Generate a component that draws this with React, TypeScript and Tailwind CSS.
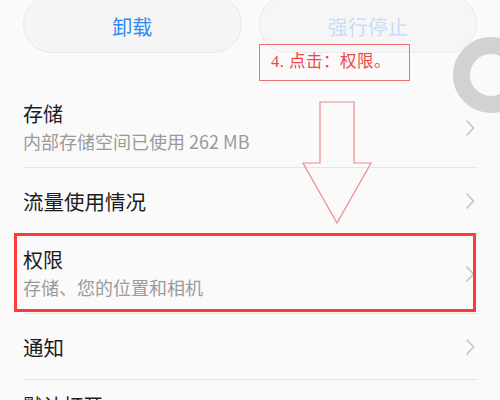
function Chevron() {
  return (
    <svg width="10" height="18" viewBox="0 0 10 18" className="mr-[3px] shrink-0">
      <polyline points="1.5,1.5 8.5,9 1.5,16.5" fill="none" stroke="#c4c4c4" strokeWidth="1.6" />
    </svg>
  );
}

function Row({ title, sub }: { title: string; sub?: string }) {
  if (sub) {
    return (
      <div className="flex h-[80px] items-center justify-between border-b border-[#e6e6e6]">
        <div className="flex flex-col">
          <span className="text-[20px] leading-[26px] text-[#1c1c1c]">{title}</span>
          <span className="mt-[1px] text-[18px] leading-[26px] text-[#9a9a9a]">{sub}</span>
        </div>
        <Chevron />
      </div>
    );
  }
  return (
    <div className="flex h-[66px] items-center justify-between border-b border-[#e6e6e6]">
      <span className="text-[20.5px] leading-[26px] text-[#1c1c1c]">{title}</span>
      <Chevron />
    </div>
  );
}

export default function App() {
  return (
    <div
      className="relative h-[400px] w-[500px] overflow-hidden bg-[#fafafa]"
      style={{ fontFamily: '"Noto Sans CJK SC", "Noto Sans", sans-serif' }}
    >
      {/* top buttons */}
      <div className="-mt-[5px] flex gap-[17px] px-[23px]">
        <button className="flex h-[58px] w-[219px] items-center justify-center rounded-full border border-[#e8e8e8] bg-[#f5f5f5] pt-[5px] text-[20px] text-[#2f8bf3]">
          卸载
        </button>
        <button className="flex h-[58px] w-[219px] items-center justify-center rounded-full border border-[#ececec] bg-[#f6f6f6] pt-[5px] text-[20px] text-[#c7ddf8]">
          强行停止
        </button>
      </div>

      {/* settings list */}
      <div className="mt-[35px] pl-[23px] pr-[22px]">
        <Row title="存储" sub="内部存储空间已使用 262 MB" />
        <Row title="流量使用情况" />
        <Row title="权限" sub="存储、您的位置和相机" />
        <Row title="通知" />
        <Row title="默认打开" sub="无默认操作" />
      </div>

      {/* gray ring on the right edge */}
      <div className="absolute left-[453px] top-[37px] h-[76px] w-[76px] rounded-full border-[17px] border-[#d2d2d2]" />

      {/* annotation */}
      <div
        className="absolute left-[259px] top-[44px] flex h-[37px] w-[151px] items-center border-[1.5px] border-[#f07070] pl-[11px] text-[16.5px] tracking-[0.5px] text-[#f04848]"
        style={{ fontFamily: '"Liberation Serif", "Noto Sans CJK SC", serif' }}
      >
        4. 点击：权限。
      </div>
      <svg className="absolute left-0 top-0" width="500" height="400" viewBox="0 0 500 400">
        <polygon
          points="320,102 354,102 354,163 371,163 337,223 303,163 320,163"
          fill="none"
          stroke="#f08a8a"
          strokeWidth="1.2"
        />
      </svg>

      {/* highlight box */}
      <div className="absolute left-[14px] top-[233px] h-[79px] w-[462px] border-[3px] border-[#ff3a3a]" />
    </div>
  );
}
